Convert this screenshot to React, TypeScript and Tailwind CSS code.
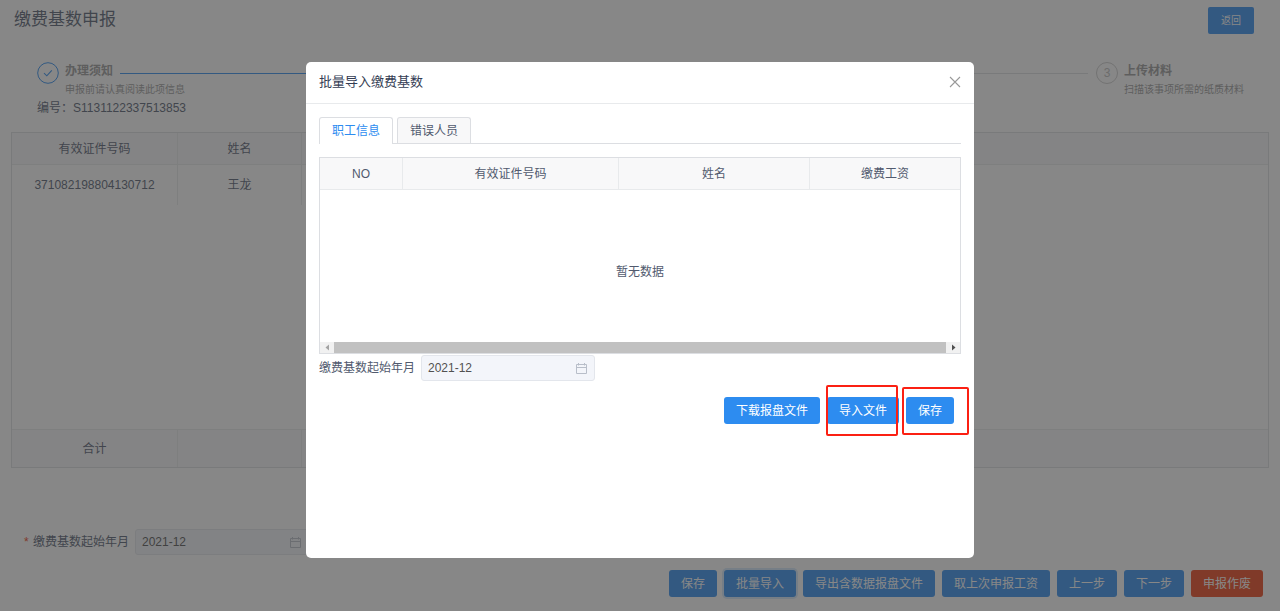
import React from "react";

const actions = ["保存", "批量导入", "导出含数据报盘文件", "取上次申报工资", "上一步", "下一步"];

const Button = ({ children, danger = false, focused = false }: { children: React.ReactNode; danger?: boolean; focused?: boolean }) => (
  <button
    type="button"
    className={`h-[27px] rounded-[3px] px-3 text-xs text-white ${danger ? "bg-[#ed4014]" : "bg-[#2d8cf0]"} ${
      focused ? "ring-2 ring-[#2d8cf0]/20" : ""
    }`}
  >
    {children}
  </button>
);

const CalendarIcon = () => (
  <svg className="pointer-events-none absolute right-2 top-[8px] h-[11px] w-[11px]" viewBox="0 0 11 11" fill="none" stroke="#b8bec9">
    <path d="M0.5 1.5h10v9h-10zM0.5 4.5h10M2.5 0v2.5M8.5 0v2.5" />
  </svg>
);

const MonthField = ({ id, required = false }: { id: string; required?: boolean }) => (
  <div className="flex items-center">
    {required && <span className="mr-[3px] w-[6px] text-xs text-[#ed4014]">*</span>}
    <label htmlFor={id} className="w-[102px] text-xs leading-[26px]">
      缴费基数起始年月
    </label>
    <div className="relative w-[174px]">
      <input
        id={id}
        readOnly
        defaultValue="2021-12"
        className="block h-[26px] w-full rounded-[3px] border border-[#e3e6ec] bg-[#f3f5fa] px-[6px] text-xs text-[#515151] outline-none"
      />
      <CalendarIcon />
    </div>
  </div>
);

const Steps = () => (
  <div className="flex pl-[37px] pr-9">
    <div className="flex flex-1">
      <svg className="h-[22px] w-[22px] shrink-0" viewBox="0 0 22 22" fill="none" stroke="#2d8cf0">
        <circle cx="11" cy="11" r="10.3" />
        <path d="M7 11.2l2.8 2.6 5-5.4" strokeWidth="1.1" />
      </svg>
      <div className="ml-[6px] flex-1">
        <div className="flex items-center gap-[7px] text-xs font-bold leading-[18px] text-[#999]">
          办理须知
          <span className="mt-[4px] h-px flex-1 bg-[#2d8cf0]" />
        </div>
        <p className="text-[10px] leading-5 text-[#999]">申报前请认真阅读此项信息</p>
      </div>
    </div>
    <div className="flex flex-1 pr-2">
      <span className="mt-[11px] h-px flex-1 bg-[#dcdee2]" />
    </div>
    <div className="flex">
      <span className="flex h-[22px] w-[22px] items-center justify-center rounded-full border border-[#ccc] text-xs text-[#bbb]">3</span>
      <div className="ml-[6px]">
        <p className="text-xs font-bold leading-[18px] text-[#999]">上传材料</p>
        <p className="text-[10px] leading-5 text-[#999]">扫描该事项所需的纸质材料</p>
      </div>
    </div>
  </div>
);

const PersonTable = () => (
  <div className="mx-[11px] border border-[#dcdee2]">
    <table className="w-full table-fixed border-separate border-spacing-0 text-center text-xs">
      <colgroup>
        <col className="w-[166px]" />
        <col className="w-[124px]" />
        <col />
      </colgroup>
      <thead>
        <tr className="h-8 bg-[#f8f8f9]">
          <th className="border-b border-r border-[#e8eaec] font-normal">有效证件号码</th>
          <th className="border-b border-r border-[#e8eaec] font-normal">姓名</th>
          <th className="border-b border-[#e8eaec]" />
        </tr>
      </thead>
      <tbody>
        <tr className="h-10">
          <td className="border-r border-[#e8eaec]">371082198804130712</td>
          <td className="border-r border-[#e8eaec]">王龙</td>
          <td />
        </tr>
        <tr className="h-56">
          <td colSpan={3} />
        </tr>
      </tbody>
      <tfoot>
        <tr className="h-[38px] bg-[#f8f8f9]">
          <td className="border-r border-t border-[#e8eaec]">合计</td>
          <td className="border-r border-t border-[#e8eaec]" />
          <td className="border-t border-[#e8eaec]" />
        </tr>
      </tfoot>
    </table>
  </div>
);

const ImportTable = () => (
  <div className="mt-[13px] border border-[#dcdee2]">
    <table className="w-full table-fixed border-separate border-spacing-0 text-center text-xs">
      <colgroup>
        <col className="w-[83px]" />
        <col className="w-[216px]" />
        <col className="w-[191px]" />
        <col />
      </colgroup>
      <thead>
        <tr className="h-8 bg-[#f8f8f9]">
          <th className="border-b border-r border-[#e8eaec] font-normal">NO</th>
          <th className="border-b border-r border-[#e8eaec] font-normal">有效证件号码</th>
          <th className="border-b border-r border-[#e8eaec] font-normal">姓名</th>
          <th className="border-b border-[#e8eaec] font-normal">缴费工资</th>
        </tr>
      </thead>
      <tbody>
        <tr className="h-[152px]">
          <td colSpan={4} className="pt-3">
            暂无数据
          </td>
        </tr>
      </tbody>
    </table>
    <div className="flex h-[11px] bg-[#f1f1f1]">
      <svg className="h-[11px] w-[14px]" viewBox="0 0 14 11" fill="#a3a3a3">
        <path d="M9 2.5v6L5.5 5.5z" />
      </svg>
      <div className="flex-1 bg-[#c1c1c1]" />
      <svg className="h-[11px] w-[14px]" viewBox="0 0 14 11" fill="#505050">
        <path d="M6 2.5v6l3.5-3z" />
      </svg>
    </div>
  </div>
);

const ImportDialog = () => (
  <div className="fixed inset-0 flex items-start justify-center bg-[#373737]/60 pt-[62px]">
    <div role="dialog" aria-labelledby="dialog-title" className="min-h-[496px] w-[668px] rounded-[5px] bg-white">
      <div className="flex h-[42px] items-center justify-between border-b border-[#e8eaec] px-[13px] pb-[2px]">
        <h2 id="dialog-title" className="text-[13px] text-[#343d54]">
          批量导入缴费基数
        </h2>
        <button type="button" aria-label="关闭">
          <svg className="h-3 w-3" viewBox="0 0 12 12" fill="none" stroke="#999" strokeWidth="1.1">
            <path d="M1 1l10 10M11 1L1 11" />
          </svg>
        </button>
      </div>
      <div className="px-[13px] pt-[13px]">
        <div role="tablist" className="flex gap-1 border-b border-[#dcdee2] text-xs">
          <button
            type="button"
            role="tab"
            aria-selected="true"
            className="-mb-px h-[27px] w-[74px] rounded-t-[3px] border border-b-0 border-[#dcdee2] bg-white text-[#2d8cf0]"
          >
            职工信息
          </button>
          <button
            type="button"
            role="tab"
            aria-selected="false"
            className="h-[26px] w-[74px] rounded-t-[3px] border border-b-0 border-[#dcdee2] bg-[#f8f8f9]"
          >
            错误人员
          </button>
        </div>
        <ImportTable />
        <div className="pt-px">
          <MonthField id="import-month" />
        </div>
        <div className="mt-4 flex justify-end gap-[7px] pr-[7px]">
          <Button>下载报盘文件</Button>
          <div className="relative flex">
            <Button>导入文件</Button>
            <span className="pointer-events-none absolute -bottom-3 -left-px -top-3 right-px rounded-[2px] border-2 border-[#fb2013]" />
          </div>
          <div className="relative flex">
            <Button>保存</Button>
            <span className="pointer-events-none absolute -bottom-[11px] -left-1 -right-[15px] -top-[10px] rounded-[2px] border-2 border-[#fb2013]" />
          </div>
        </div>
      </div>
    </div>
  </div>
);

const App = () => {
  return (
    <div className="min-h-screen bg-white font-['Liberation_Sans','Noto_Sans_CJK_SC',sans-serif] text-[#515a6e]">
      <header className="flex items-start justify-between pb-7 pl-[14px] pr-[26px] pt-[7px]">
        <h1 className="text-[17px] leading-[26px]">缴费基数申报</h1>
        <button type="button" className="h-[27px] rounded-[2px] bg-[#2d8cf0] px-[13px] text-[10px] text-white">
          返回
        </button>
      </header>
      <Steps />
      <p className="mb-4 pl-[37px] text-xs">编号：S1131122337513853</p>
      <PersonTable />
      <div className="pl-6 pt-[61px]">
        <MonthField id="base-month" required />
      </div>
      <div className="flex justify-end gap-[7px] pr-[17px] pt-[15px]">
        {actions.map((name) => (
          <Button key={name} focused={name === "批量导入"}>
            {name}
          </Button>
        ))}
        <Button danger>申报作废</Button>
      </div>
      <ImportDialog />
    </div>
  );
};

export default App;
